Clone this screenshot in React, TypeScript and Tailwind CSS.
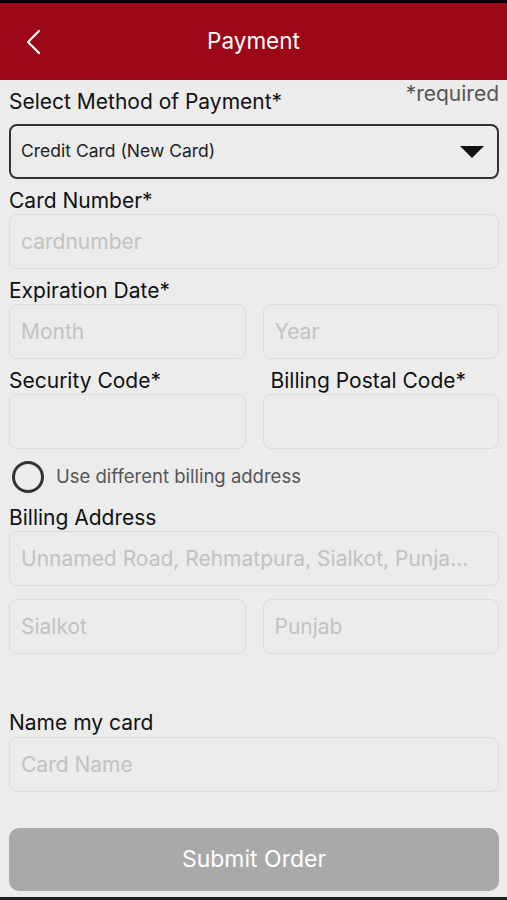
import React from "react";

const font = { fontFamily: "Inter, 'Noto Sans', sans-serif" };

const Field = ({ placeholder = "", className = "" }: { placeholder?: string; className?: string }) => (
  <div
    className={`h-[55px] rounded-[8px] border border-[#dcdcdc] bg-[#ececec] flex items-center px-[11px] text-[21px] text-[#c2c2c2] whitespace-nowrap overflow-hidden ${className}`}
  >
    {placeholder}
  </div>
);

const Label = ({ children, className = "" }: { children: React.ReactNode; className?: string }) => (
  <div className={`text-[21px] leading-[24px] text-[#111] ${className}`}>{children}</div>
);

export default function App() {
  return (
    <div className="w-[507px] h-[900px] bg-[#ececec] flex flex-col overflow-hidden" style={font}>
      <div className="h-[3px] bg-black" />
      {/* Header */}
      <div className="h-[77px] bg-[#9c0616] flex items-center relative">
        <svg className="absolute left-[24px] top-[26px]" width="18" height="26" viewBox="0 0 18 26">
          <path d="M15 2 L4 13 L15 24" fill="none" stroke="white" strokeWidth="2.2" strokeLinecap="round" strokeLinejoin="round" />
        </svg>
        <div className="flex-1 text-center text-white text-[22.5px] mt-[-2px]">Payment</div>
      </div>

      <div className="flex-1 flex flex-col px-[9px] pr-[8px]">
        <div className="flex justify-between items-start mt-[10px]">
          <Label>Select Method of Payment*</Label>
          <div className="text-[21px] leading-[22px] text-[#555] mt-[-7px]">*required</div>
        </div>
        <div className="mt-[10px] h-[55px] rounded-[8px] border-2 border-[#333] flex items-center justify-between pl-[10px] pr-[13px]">
          <span className="text-[17.5px] text-[#222]">Credit Card (New Card)</span>
          <svg width="24" height="12" viewBox="0 0 24 12">
            <path d="M0 0 H24 L12 12 Z" fill="#111" />
          </svg>
        </div>

        <Label className="mt-[10px]">Card Number*</Label>
        <Field placeholder="cardnumber" className="mt-[1px]" />

        <Label className="mt-[10px]">Expiration Date*</Label>
        <div className="grid grid-cols-2 gap-[17px] mt-[1px]">
          <Field placeholder="Month" />
          <Field placeholder="Year" />
        </div>

        <div className="grid grid-cols-2 gap-[17px] mt-[10px]">
          <Label>Security Code*</Label>
          <Label className="pl-[8px]">Billing Postal Code*</Label>
        </div>
        <div className="grid grid-cols-2 gap-[17px] mt-[1px]">
          <Field />
          <Field />
        </div>

        <div className="flex items-center mt-[12px] pl-[3px]">
          <div className="w-[32px] h-[32px] rounded-full border-[3px] border-[#333]" />
          <span className="ml-[12px] text-[18.5px] text-[#555]">Use different billing address</span>
        </div>

        <Label className="mt-[13px]">Billing Address</Label>
        <Field placeholder="Unnamed Road, Rehmatpura, Sialkot, Punja..." className="mt-[1px]" />
        <div className="grid grid-cols-2 gap-[17px] mt-[13px]">
          <Field placeholder="Sialkot" />
          <Field placeholder="Punjab" />
        </div>

        <Label className="mt-[57px]">Name my card</Label>
        <Field placeholder="Card Name" className="mt-[2px]" />

        <div className="mt-[36px] h-[63px] rounded-[10px] bg-[#a9a9a9] flex items-center justify-center text-white text-[23px]">
          Submit Order
        </div>
      </div>
      <div className="h-[3px] bg-[#222]" />
    </div>
  );
}
